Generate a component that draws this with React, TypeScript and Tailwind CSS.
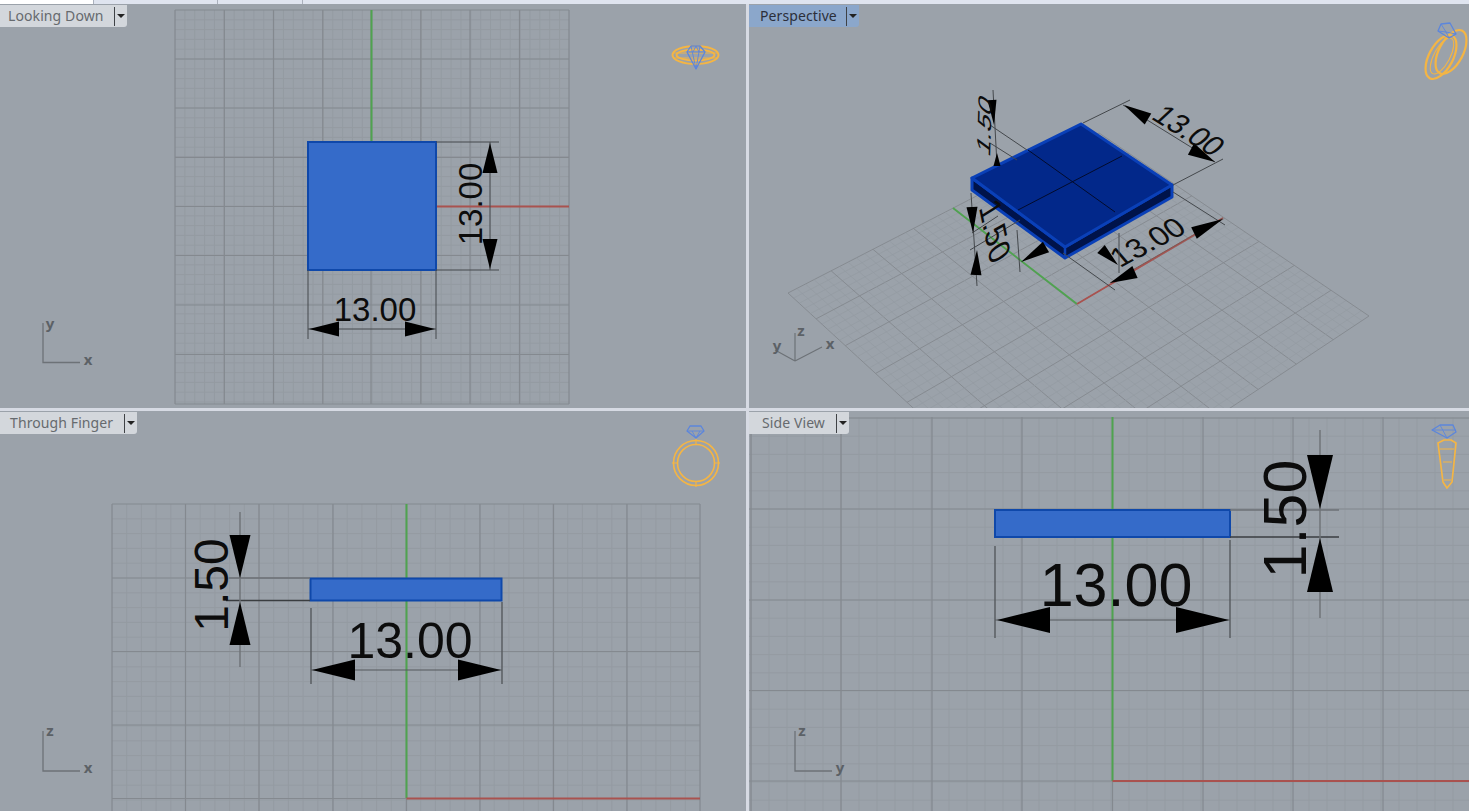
import type { ReactNode } from "react";

type Pt = [number, number];

const fontDim = "font-['Liberation_Sans',Arial,sans-serif]";

function range(n: number) {
  return Array.from({ length: n }, (_, i) => i);
}

// flat construction plane, lines given in page coordinates
function FlatGrid({ x0, x1, y0, y1, xs, ys }: { x0: number; x1: number; y0: number; y1: number; xs: number[]; ys: number[] }) {
  const stepX = (xs[1] - xs[0]) / 5;
  const stepY = (ys[1] - ys[0]) / 5;
  const minorX = range(200).map((i) => xs[0] + (i - 100) * stepX).filter((x) => x > x0 && x < x1);
  const minorY = range(200).map((i) => ys[0] + (i - 100) * stepY).filter((y) => y > y0 && y < y1);
  return (
    <g>
      {minorX.map((x) => (
        <line key={"a" + x} x1={x} x2={x} y1={y0} y2={y1} stroke="#949ba2" strokeWidth={1} />
      ))}
      {minorY.map((y) => (
        <line key={"b" + y} x1={x0} x2={x1} y1={y} y2={y} stroke="#949ba2" strokeWidth={1} />
      ))}
      {xs.map((x) => (
        <line key={"c" + x} x1={x} x2={x} y1={y0} y2={y1} stroke="#84898f" strokeWidth={1.2} />
      ))}
      {ys.map((y) => (
        <line key={"d" + y} x1={x0} x2={x1} y1={y} y2={y} stroke="#84898f" strokeWidth={1.2} />
      ))}
    </g>
  );
}

// perspective plane: maps the unit square on to the four corners
function homography(p0: Pt, p1: Pt, p2: Pt, p3: Pt) {
  const dx1 = p1[0] - p2[0];
  const dx2 = p3[0] - p2[0];
  const sx = p0[0] - p1[0] + p2[0] - p3[0];
  const dy1 = p1[1] - p2[1];
  const dy2 = p3[1] - p2[1];
  const sy = p0[1] - p1[1] + p2[1] - p3[1];
  const den = dx1 * dy2 - dx2 * dy1;
  const g = (sx * dy2 - dx2 * sy) / den;
  const h = (dx1 * sy - sx * dy1) / den;
  const a = p1[0] - p0[0] + g * p1[0];
  const b = p3[0] - p0[0] + h * p3[0];
  const d = p1[1] - p0[1] + g * p1[1];
  const e = p3[1] - p0[1] + h * p3[1];
  return (u: number, v: number): Pt => {
    const w = g * u + h * v + 1;
    return [(a * u + b * v + p0[0]) / w, (d * u + e * v + p0[1]) / w];
  };
}

function PerspectiveGrid() {
  const map = homography([788, 293], [1099, 133], [1369, 316], [1046, 530]);
  return (
    <g>
      {range(41).map((i) => {
        const t = i / 40;
        const major = i % 5 === 0;
        const s = major ? "#868b91" : "#949ba2";
        const a = map(t, 0);
        const b = map(t, 1);
        const c = map(0, t);
        const d = map(1, t);
        return (
          <g key={i} stroke={s} strokeWidth={major ? 1 : 0.7}>
            <line x1={a[0]} y1={a[1]} x2={b[0]} y2={b[1]} />
            <line x1={c[0]} y1={c[1]} x2={d[0]} y2={d[1]} />
          </g>
        );
      })}
    </g>
  );
}

function Arrow({ tip, base, w }: { tip: Pt; base: Pt; w: number }) {
  const dx = base[0] - tip[0];
  const dy = base[1] - tip[1];
  const l = Math.hypot(dx, dy);
  const nx = (-dy / l) * w;
  const ny = (dx / l) * w;
  const pts = `${tip[0]},${tip[1]} ${base[0] + nx},${base[1] + ny} ${base[0] - nx},${base[1] - ny}`;
  return <polygon points={pts} fill="#000" />;
}

function Seg({ a, b, c = "#44484c", w = 1 }: { a: Pt; b: Pt; c?: string; w?: number }) {
  return <line x1={a[0]} y1={a[1]} x2={b[0]} y2={b[1]} stroke={c} strokeWidth={w} />;
}

function DimText({ x, y, size, rotate, children }: { x: number; y: number; size: number; rotate?: number; children: ReactNode }) {
  return (
    <text
      x={x}
      y={y}
      fontSize={size}
      textAnchor="middle"
      fill="#0c0c0c"
      className={fontDim}
      transform={rotate ? `rotate(${rotate} ${x} ${y})` : undefined}
    >
      {children}
    </text>
  );
}

function SkewText({ m, size, children }: { m: number[]; size: number; children: ReactNode }) {
  return (
    <text fontSize={size} fill="#0c0c0c" className={fontDim} transform={`matrix(${m.join(" ")})`}>
      {children}
    </text>
  );
}

function AxisLabel({ x, y, children }: { x: number; y: number; children: ReactNode }) {
  return (
    <text x={x} y={y} fontSize={15} fontWeight={700} fill="#5c6166" textAnchor="middle" className="font-['Noto_Sans',sans-serif]">
      {children}
    </text>
  );
}

function Gem({ points, lines }: { points: string; lines: string }) {
  return (
    <g fill="none" stroke="#5c86dc" strokeWidth={1.3} strokeLinejoin="round">
      <polygon points={points} />
      <path d={lines} strokeWidth={0.9} />
    </g>
  );
}

const ringStroke = "#f4b544";

function Viewport({ label, box, active, tabClass, children }: { label: string; box: string; active?: boolean; tabClass: string; children: ReactNode }) {
  return (
    <div className="relative overflow-hidden bg-[#9ba2aa]">
      <svg className="absolute inset-0 h-full w-full" viewBox={box}>
        {children}
      </svg>
      <div
        className={`absolute left-0 top-[1px] flex h-[22px] items-center rounded-br-[3px] font-['Noto_Sans',sans-serif] text-[14px] ${tabClass} ${
          active ? "bg-[#8ba7cb] text-[#2b2f3a]" : "bg-[#d3d7dc] text-[#666a6e]"
        }`}
      >
        <span className="mb-[2px] flex-1 whitespace-nowrap tracking-[0.1px]">{label}</span>
        <span className="ml-auto h-[19px] w-px bg-[#3f4246]" />
        <span className="ml-[2px] mr-[2px] h-0 w-0 border-x-[4px] border-t-[4px] border-x-transparent border-t-[#222]" />
      </div>
    </div>
  );
}

export default function App() {
  return (
    <div className="flex h-[811px] w-[1469px] flex-col overflow-hidden bg-[#d6dae3]">
      <div className="flex h-[4px] shrink-0 bg-[#dfe4ef]">
        <div className="w-[93px] bg-white" />
        <div className="w-[124px] border-l border-[#aab0bc]" />
        <div className="w-[85px] border-l border-[#aab0bc]" />
        <div className="border-l border-[#aab0bc] pl-px" />
      </div>
      <div className="grid flex-1 grid-cols-[746px_720px] grid-rows-[404px_400px] gap-x-[3px] gap-y-[3px]">
        <Viewport label="Looking Down" box="0 4 746 404" tabClass="w-[127px] pl-[8px]">
          <FlatGrid x0={175} x1={569} y0={10} y1={404} xs={[175, 224.3, 273.5, 322.8, 371, 420.8, 470, 519.5, 569]} ys={[10, 59, 108, 157.3, 206.5, 255.5, 305, 354.5, 404]} />
          <Seg a={[371.5, 10]} b={[371.5, 142]} c="#4fa34f" w={2} />
          <Seg a={[436, 206.5]} b={[569, 206.5]} c="#a9524f" w={2} />
          <rect x={308} y={142} width={128} height={128} fill="#356bc9" stroke="#0f48aa" strokeWidth={2} />
          <Seg a={[436, 142]} b={[499, 142]} />
          <Seg a={[436, 270]} b={[499, 270]} />
          <Seg a={[490, 142]} b={[490, 270]} />
          <Arrow tip={[490, 143]} base={[490, 173]} w={7.5} />
          <Arrow tip={[490, 269]} base={[490, 239]} w={7.5} />
          <DimText x={482} y={204} size={33} rotate={-90}>13.00</DimText>
          <Seg a={[308, 270]} b={[308, 339]} />
          <Seg a={[436, 270]} b={[436, 339]} />
          <Seg a={[308, 329]} b={[436, 329]} />
          <Arrow tip={[309, 329]} base={[339, 329]} w={7.5} />
          <Arrow tip={[435, 329]} base={[405, 329]} w={7.5} />
          <DimText x={375} y={321} size={33}>13.00</DimText>
          <path d="M43 323 V362.5 H80" fill="none" stroke="#6d7277" strokeWidth={1.3} />
          <AxisLabel x={50} y={329}>y</AxisLabel>
          <AxisLabel x={88} y={365}>x</AxisLabel>
          <g fill="none" stroke={ringStroke} strokeWidth={2}>
            <ellipse cx={695.5} cy={55} rx={23} ry={9} />
            <ellipse cx={695.5} cy={55} rx={19} ry={5.5} />
            <path d="M673 53 L718 53 M673 58 L718 58" strokeWidth={0.9} />
          </g>
          <Gem points="691,46 700,46 705,52 696,69 687,52" lines="M687 52 H705 M691 46 L696 69 M700 46 L696 69 M693 52 L696 46 L699 52" />
        </Viewport>

        <Viewport label="Perspective" box="749 4 720 404" active tabClass="w-[110px] pl-[11px]">
          <PerspectiveGrid />
          <Seg a={[1077, 304]} b={[953, 208]} c="#4fa34f" w={1.8} />
          <Seg a={[1077, 304]} b={[1223, 218]} c="#a9524f" w={1.8} />

          <polygon points="972,178 1065,247 1172,185 1172,197 1065,258 972,190" fill="#00134a" stroke="#0a40b8" strokeWidth={3} strokeLinejoin="round" />
          <line x1={1065} y1={247} x2={1065} y2={258} stroke="#0a40b8" strokeWidth={2.5} />
          <polygon points="1081,124 1172,185 1065,247 972,178" fill="#02288a" stroke="#0a40b8" strokeWidth={3} strokeLinejoin="round" />
          <Seg a={[1028, 150]} b={[1115, 212]} c="#020b2c" />
          <Seg a={[1122, 156]} b={[1018, 210]} c="#020b2c" />

          <Seg a={[1083, 123]} b={[1130, 100]} />
          <Seg a={[1173, 185]} b={[1223, 159]} />
          <Seg a={[1123, 105]} b={[1215, 162]} />
          <Arrow tip={[1124, 105]} base={[1148, 119]} w={6.5} />
          <Arrow tip={[1215, 162]} base={[1191, 149]} w={6.5} />
          <SkewText m={[0.78, 0.49, -0.7, 0.65, 1150, 118]} size={32}>13.00</SkewText>

          <Seg a={[1063, 253]} b={[1115, 290]} />
          <Seg a={[1173, 192]} b={[1225, 225]} />
          <Seg a={[1110, 283]} b={[1223, 218]} c="#7d5a57" />
          <Arrow tip={[1110, 283]} base={[1135, 272]} w={6.5} />
          <Arrow tip={[1223, 219]} base={[1194, 233]} w={6.5} />
          <SkewText m={[0.88, -0.47, 0.62, 0.72, 1120, 268]} size={31}>13.00</SkewText>

          <Seg a={[1017, 230]} b={[1020, 272]} />
          <Seg a={[1119, 233]} b={[1119, 273]} />
          <Arrow tip={[1021, 262]} base={[1046, 247]} w={6} />
          <Arrow tip={[1118, 265]} base={[1101, 249]} w={5.5} />

          <Seg a={[990, 125]} b={[1027, 150]} />
          <Seg a={[990, 143]} b={[1017, 160]} />
          <Seg a={[993, 90]} b={[997, 165]} />
          <Arrow tip={[994, 125]} base={[992, 100]} w={4.5} />
          <Arrow tip={[997, 153]} base={[997, 166]} w={3.5} />
          <SkewText m={[0.03, -1, 0.65, 0.48, 990, 158]} size={29}>1.50</SkewText>

          <Seg a={[972, 233]} b={[998, 216]} />
          <Seg a={[970, 250]} b={[1020, 220]} />
          <Seg a={[971, 193]} b={[977, 286]} />
          <Arrow tip={[973, 233]} base={[972, 207]} w={5.5} />
          <Arrow tip={[977, 250]} base={[976, 275]} w={5.5} />
          <SkewText m={[0.2, 0.97, -0.93, 0.58, 979, 208]} size={31}>1.50</SkewText>

          <path d="M795 361 V333 M795 361 L775 350 M795 361 L822 347" fill="none" stroke="#6d7277" strokeWidth={1.2} />
          <AxisLabel x={801} y={336}>z</AxisLabel>
          <AxisLabel x={777} y={351}>y</AxisLabel>
          <AxisLabel x={830} y={349}>x</AxisLabel>

          <g fill="none" stroke={ringStroke} strokeWidth={2.2}>
            <ellipse cx={1441} cy={57} rx={12} ry={24} transform="rotate(28 1441 57)" />
            <ellipse cx={1451} cy={52} rx={12} ry={24} transform="rotate(28 1451 52)" />
            <ellipse cx={1442} cy={56} rx={8} ry={20} transform="rotate(28 1442 56)" strokeWidth={1} />
          </g>
          <Gem points="1441,24 1450,23 1456,34 1449,38 1438,31" lines="M1441 24 L1446 32 L1456 34 M1446 32 L1438 31 M1446 32 L1449 38" />
        </Viewport>

        <Viewport label="Through Finger" box="0 411 746 400" tabClass="w-[137px] pl-[10px]">
          <FlatGrid x0={112} x1={700} y0={504} y1={811} xs={[112, 185.5, 259, 333, 406.5, 480, 553.5, 627, 700]} ys={[504, 578, 651.5, 725, 798.5]} />
          <Seg a={[406.5, 504]} b={[406.5, 798]} c="#4fa34f" w={2} />
          <Seg a={[406.5, 798.5]} b={[700, 798.5]} c="#a9524f" w={2} />
          <rect x={310.5} y={578.5} width={191} height={22} fill="#356bc9" stroke="#0f48aa" strokeWidth={2} />
          <Seg a={[229, 578]} b={[310, 578]} c="#6d7176" w={1.4} />
          <Seg a={[226, 600.5]} b={[310, 600.5]} c="#3a3d40" w={1.4} />
          <Seg a={[240, 512]} b={[240, 667]} c="#6d7176" w={1.4} />
          <Arrow tip={[240, 578]} base={[240, 535]} w={10.5} />
          <Arrow tip={[240, 602]} base={[240, 645]} w={10.5} />
          <DimText x={228} y={585} size={48} rotate={-90}>1.50</DimText>
          <Seg a={[311, 608]} b={[311, 684]} c="#55595d" w={1.4} />
          <Seg a={[502, 602]} b={[502, 684]} c="#55595d" w={1.4} />
          <Seg a={[311, 670]} b={[502, 670]} c="#55595d" />
          <Arrow tip={[312, 670]} base={[355, 670]} w={10.5} />
          <Arrow tip={[501, 670]} base={[458, 670]} w={10.5} />
          <DimText x={410} y={658} size={50}>13.00</DimText>
          <path d="M43 731 V771 H80" fill="none" stroke="#6d7277" strokeWidth={1.3} />
          <AxisLabel x={50} y={736}>z</AxisLabel>
          <AxisLabel x={88} y={773}>x</AxisLabel>
          <g fill="none" stroke={ringStroke} strokeWidth={1.6}>
            <circle cx={696} cy={463} r={22.5} />
            <circle cx={696} cy={463} r={18.5} />
            <path d="M696 439 V444 M696 482 V487 M672 463 H677 M715 463 H720" strokeWidth={1.2} />
          </g>
          <Gem points="690,426 701,426 704,431 696,438 687,431" lines="M687 431 H704 M692 431 L696 438 L700 431" />
        </Viewport>

        <Viewport label="Side View" box="749 411 720 400" tabClass="w-[100px] pl-[13px]">
          <FlatGrid x0={749} x1={1469} y0={417} y1={811} xs={[751, 841, 932, 1022, 1112.5, 1203, 1293, 1383]} ys={[418, 509, 600, 690.5, 781]} />
          <Seg a={[1112.5, 417]} b={[1112.5, 781]} c="#4fa34f" w={2} />
          <Seg a={[1112.5, 781]} b={[1469, 781]} c="#a9524f" w={2} />
          <rect x={995} y={510} width={235} height={27} fill="#356bc9" stroke="#0f48aa" strokeWidth={2} />
          <Seg a={[1230, 510]} b={[1339, 510]} c="#6d7176" w={1.4} />
          <Seg a={[1230, 537]} b={[1339, 537]} c="#3a3d40" w={1.4} />
          <Seg a={[1320, 430]} b={[1320, 618]} c="#6d7176" w={1.4} />
          <Arrow tip={[1320, 509]} base={[1320, 455]} w={13} />
          <Arrow tip={[1320, 538]} base={[1320, 592]} w={13} />
          <DimText x={1306} y={519} size={61} rotate={-90}>1.50</DimText>
          <Seg a={[995, 546]} b={[995, 638]} c="#55595d" w={1.4} />
          <Seg a={[1230, 540]} b={[1230, 638]} c="#55595d" w={1.4} />
          <Seg a={[995, 620]} b={[1230, 620]} c="#55595d" />
          <Arrow tip={[997, 620]} base={[1050, 620]} w={13} />
          <Arrow tip={[1229, 620]} base={[1176, 620]} w={13} />
          <DimText x={1116} y={606} size={61}>13.00</DimText>
          <path d="M795 731 V771 H832" fill="none" stroke="#6d7277" strokeWidth={1.3} />
          <AxisLabel x={802} y={736}>z</AxisLabel>
          <AxisLabel x={840} y={773}>y</AxisLabel>
          <g fill="none" stroke={ringStroke} strokeWidth={1.7} strokeLinejoin="round">
            <polygon points="1438,443 1444,440 1451,440 1456,443 1452,482 1447,488 1443,482" />
            <path d="M1440 449 H1454 M1443 462 H1452 M1444 480 H1451" strokeWidth={1} />
          </g>
          <Gem points="1432,430 1440,425 1453,425 1456,432 1447,438" lines="M1432 430 H1456 M1440 425 L1447 438" />
        </Viewport>
      </div>
    </div>
  );
}
